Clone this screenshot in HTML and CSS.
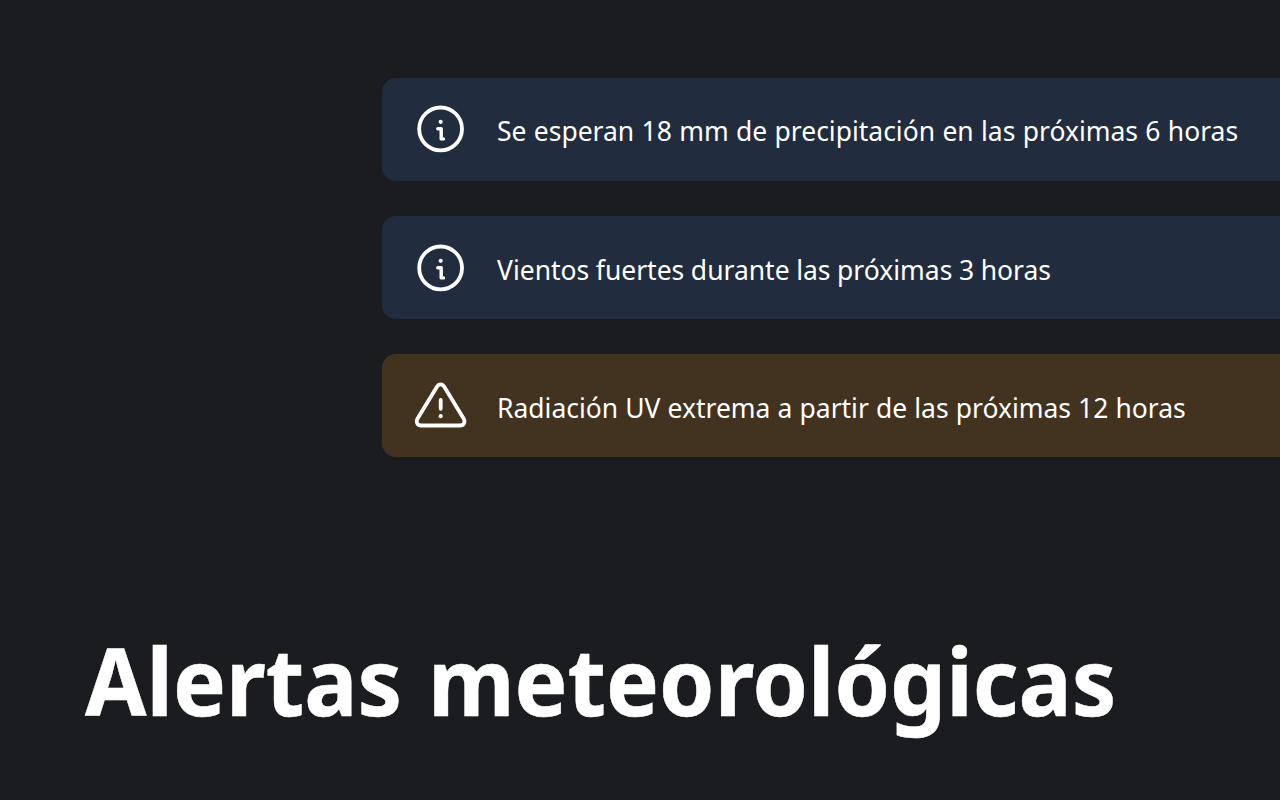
FILE: index.html
```html
<!DOCTYPE html>
<html lang="es">
<head>
<meta charset="utf-8">
<title>Alertas meteorológicas</title>
<link rel="stylesheet" href="styles.css">
</head>
<body>
<main class="page">
  <section class="alerts">
    <div class="alert alert-info alert-first">
      <svg class="icon" viewBox="0 0 54 54"><circle cx="27.6" cy="26.9" r="21.4"/><circle class="solid" cx="27.7" cy="19.8" r="2.1"/><path class="glyph" d="M24.8 26.8H28.2V36.9H30.5"/></svg>
      <span class="message">Se esperan 18 mm de precipitación en las próximas 6 horas</span>
    </div>
    <div class="alert alert-info">
      <svg class="icon" viewBox="0 0 54 54"><circle cx="27.6" cy="26.9" r="21.4"/><circle class="solid" cx="27.7" cy="19.8" r="2.1"/><path class="glyph" d="M24.8 26.8H28.2V36.9H30.5"/></svg>
      <span class="message message-wind">Vientos fuertes durante las próximas 3 horas</span>
    </div>
    <div class="alert alert-warning">
      <svg class="icon" viewBox="0 0 54 54"><path d="M23.8 8C25.5 4.4 29.7 4.4 31.4 8L50.6 39.5C52.6 43 50.8 46.5 47 46.5H8.2C4.4 46.5 2.6 43 4.6 39.5ZM27.7 21V29.8"/><circle class="solid" cx="27.7" cy="37.2" r="2.1"/></svg>
      <span class="message message-uv">Radiación UV extrema a partir de las próximas 12 horas</span>
    </div>
  </section>
  <h1 class="title">Alertas meteorológicas</h1>
</main>
</body>
</html>
```
FILE: styles.css
```css
body { margin: 0; background: #1b1c1f; color: #fff; font-family: "Noto Sans", sans-serif; }
.page { height: 800px; box-sizing: border-box; padding-top: 78px; overflow: hidden; }
.alerts { display: flex; flex-direction: column; gap: 35px; margin-left: 382px; }
.alert { height: 103px; box-sizing: border-box; padding-left: 31px; display: flex; align-items: center; gap: 30px; border-radius: 14px 0 0 14px; }
.alert-first { padding-bottom: 1px; }
.alert-info { background: #212c3e; }
.alert-warning { background: #423220; }
.icon { width: 54px; height: 54px; flex: none; fill: none; stroke: #fff; stroke-width: 3.8; stroke-linecap: round; stroke-linejoin: round; }
.icon .solid { fill: #fff; stroke: none; }
.icon .glyph { stroke-width: 3.4; }
.message { font-size: 28px; line-height: 40px; white-space: nowrap; padding-top: 2px; word-spacing: 0.5px; transform: scaleX(0.945); transform-origin: left; }
.message-wind { word-spacing: -0.3px; }
.message-uv { word-spacing: 0.25px; }
.title { width: max-content; margin: 158px 0 0 85px; font-size: 93px; line-height: 130px; white-space: nowrap; word-spacing: 3px; transform: scaleX(0.955); transform-origin: left; -webkit-text-stroke: 0.5px #fff; }
```
